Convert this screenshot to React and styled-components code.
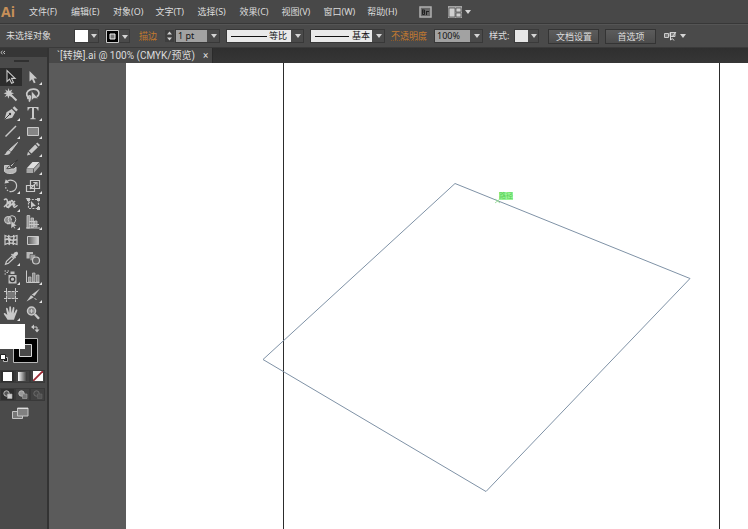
import React, { useState } from 'react';
import styled, { createGlobalStyle } from 'styled-components';

const GlobalStyle = createGlobalStyle`
  * {
    box-sizing: border-box;
  }
  body {
    margin: 0;
    background: #333333;
    color: #dcdcdc;
    font-family: 'Noto Sans', 'Noto Sans CJK SC', sans-serif;
    font-size: 9px;
    line-height: 12px;
  }
  button, input, select {
    margin: 0;
    padding: 0;
    border: 0;
    background: none;
    color: inherit;
    font: inherit;
  }
  svg {
    display: block;
    flex: none;
  }
`;

const Window = styled.div`
  display: flex;
  flex-direction: column;
  min-height: 100vh;
`;

const MenuBar = styled.header`
  display: flex;
  align-items: center;
  height: 24px;
  background: #484848;
  border-bottom: 1px solid #383838;
`;

const Logo = styled.span`
  width: 24px;
  padding-left: 1px;
  color: #c79059;
  font-family: 'Open Sans', sans-serif;
  font-size: 14px;
  font-weight: bold;
  line-height: 18px;
`;

const Menus = styled.nav`
  display: flex;
`;

const MenuButton = styled.button`
  height: 20px;
  min-width: 42px;
  padding: 0 7px 0 5px;
  text-align: left;
  white-space: nowrap;
`;

const BarTools = styled.div`
  display: flex;
  align-items: center;
  gap: 16px;
  margin-left: 15px;
`;

const IconButton = styled.button`
  display: flex;
  align-items: center;
  gap: 3px;
`;

const ControlBar = styled.div`
  display: flex;
  align-items: center;
  gap: 6px;
  height: 24px;
  padding: 0 6px;
  background: #4a4a4a;
  border-top: 1px solid #555555;
  border-bottom: 1px solid #3a3a3a;
  white-space: nowrap;
`;

const Status = styled.span`
  width: 62px;
`;

const Group = styled.div`
  display: flex;
  align-items: center;
  gap: ${(props) => props.$gap || 6}px;
  margin-left: ${(props) => props.$indent || 0}px;
`;

const Label = styled.label`
  color: #c47a30;
  width: ${(props) => props.$width}px;
  text-decoration: underline dotted #8a5a2c;
`;

const SwatchButton = styled.button`
  display: grid;
  grid-template-columns: 13px 11px;
  align-items: center;
  justify-items: center;
  height: 14px;
  border: 1px solid #3a3a3a;
  width: 25px;
`;

const Swatch = styled.span`
  width: 13px;
  height: 12px;
  background: ${(props) => props.$color};
`;

const Combo = styled.div`
  display: grid;
  grid-template-columns: 1fr 11px;
  align-items: center;
  width: ${(props) => props.$width}px;
  height: 14px;
  border: 1px solid #383838;
  background: linear-gradient(${(props) => props.$fill}, ${(props) => props.$fill})
    no-repeat left / calc(100% - 12px) 100%;
  color: #161616;
  select,
  input {
    grid-area: 1 / 1 / 2 / 3;
    appearance: none;
    width: 100%;
    height: 12px;
    padding-left: ${(props) => props.$pad || 2}px;
    line-height: 12px;
    outline: 0;
  }
  input {
    width: calc(100% - 12px);
  }
  > svg {
    grid-area: 1 / 2;
    justify-self: center;
    pointer-events: none;
  }
`;

const StrokeLine = styled.span`
  grid-area: 1 / 1;
  width: ${(props) => props.$length}px;
  height: 1px;
  margin-left: 4px;
  background: #111111;
  pointer-events: none;
`;

const TextButton = styled.button`
  width: 51px;
  height: 15px;
  border: 1px solid #343434;
  background: linear-gradient(#5c5c5c, #4c4c4c);
  line-height: 13px;
`;

const Body = styled.div`
  display: flex;
  flex: 1;
`;

const ToolPanel = styled.aside`
  display: flex;
  flex-direction: column;
  width: 49px;
  background: #4a4a4a;
  border-right: 2px solid #333333;
`;

const PanelHead = styled.div`
  height: 9px;
  background: #363636;
  color: #c8c8c8;
`;

const Grip = styled.div`
  display: flex;
  justify-content: center;
  padding: 3px 4px 7px 0;
  height: 11px;
  &::before {
    content: '';
    width: 15px;
    height: 2px;
    background: #303030;
  }
`;

const ToolGrid = styled.div`
  display: grid;
  grid-template-columns: 22px 22px;
  margin-bottom: 1px;
`;

const ToolButton = styled.button`
  display: flex;
  align-items: center;
  justify-content: center;
  height: 18px;
  color: #c9c9c9;
  background: ${(props) => (props.$active ? '#2d2d2d' : 'transparent')};
`;

const PaintButtons = styled.div`
  display: grid;
  grid-template-columns: repeat(3, 15px);
  height: 18px;
  align-items: center;
`;

const PaintButton = styled.button`
  display: flex;
  align-items: center;
  justify-content: center;
  height: 13px;
  background: ${(props) => (props.$active ? '#2f2f2f' : '#424242')};
  border: 1px solid #393939;
`;

const ScreenButton = styled.button`
  display: flex;
  margin: 4px 0 0 12px;
`;

const Document = styled.section`
  display: flex;
  flex: 1;
  flex-direction: column;
  min-width: 0;
`;

const TabStrip = styled.div`
  display: flex;
  height: 15px;
  background: linear-gradient(#2f2f2f, #363636);
`;

const Tab = styled.div`
  display: flex;
  align-items: center;
  gap: 8px;
  padding: 0 4px 0 8px;
  background: #484848;
  border-right: 1px solid #2b2b2b;
  font-family: Roboto, 'Noto Sans CJK SC', sans-serif;
  font-size: 10px;
  white-space: nowrap;
`;

const Pasteboard = styled.main`
  display: flex;
  flex: 1;
  padding-left: 77px;
  background: #5b5b5b;
`;

const Canvas = styled.div`
  position: relative;
  flex: 1;
  overflow: hidden;
  background: #ffffff;
`;

const Drawing = styled.svg`
  position: absolute;
  width: 100%;
  height: 100%;
`;

const PathHint = styled.span`
  position: absolute;
  left: 373px;
  top: 129px;
  background: #9af598;
  color: #57cf55;
  font-size: 7px;
  line-height: 8px;
`;

const Arrow = () => (
  <svg width="6" height="4" viewBox="0 0 6 4">
    <path d="M0 0h6L3 4z" fill="#d4d4d4" />
  </svg>
);

const line = { fill: 'none', stroke: 'currentColor', strokeWidth: 1.2 };

const icons = {
  selection: (
    <path d="M4 1.5v11l2.6-2.4 2 4.2 1.9-.9-2-4h3.6z" fill="#222" stroke="currentColor" strokeWidth="1.1" />
  ),
  direct: <path d="M4.5 2v10.5l2.5-2.3 1.9 4 1.7-.8-1.9-3.9h3.4z" fill="currentColor" />,
  wand: (
    <>
      <path d="M7.5 7.5l6 6" stroke="currentColor" strokeWidth="1.9" />
      <path d="M5.5 1l1 3 2.8-1.6L8 5.3l3 1-3 1.1 1.2 2.8-2.8-1.5-1 3-1-3-3 1.5L3.6 7.4l-3-1.1 3-1-1.5-2.9L4.700 4z" fill="currentColor" />
    </>
  ),
  lasso: (
    <>
      <path d="M5 11.5C1.5 10.5.8 6.5 3 4.2c3-3 9-2.5 10.5.3 1.2 2.3-.2 5-2.5 5.5M4 9c-2 .8-1.5 3 .5 2.6S6 8.500 4 9M5 12c0 1.200-.5 2-1.200 2.400" {...line} strokeWidth="1.7" />
      <path d="M6.500 4v9.500l2.400-2.200 4.300.2z" fill="currentColor" stroke="#4a4a4a" strokeWidth=".5" />
    </>
  ),
  pen: (
    <>
      <path d="M1.500 14.500l2-7.300L8.700 4l3.500 3.400-3 5.300z" fill="currentColor" />
      <path d="M9.600 3l1.700-1.700 3.600 3.500-1.700 1.700z" fill="currentColor" />
      <path d="M1.500 14.500l5-5" stroke="#3a3a3a" />
      <circle cx="7" cy="9" r="1.200" fill="#3a3a3a" />
    </>
  ),
  type: (
    <path d="M2.500 2h11v3.400h-.8C12.300 3.500 11.600 3 9 3v9.300c0 .9.400 1.100 1.700 1.200v.8H5.300v-.8c1.300-.1 1.700-.3 1.700-1.200V3c-2.600 0-3.300.5-3.700 2.400h-.8z" fill="currentColor" />
  ),
  segment: <path d="M2.500 13.500l10.500-10.500" stroke="currentColor" strokeWidth="1.400" />,
  rectangle: <path d="M2.500 4.500h11v8h-11z" fill="#858585" stroke="currentColor" />,
  brush: (
    <>
      <path d="M14.500 1.500L8 10.300 6.300 8.700z" fill="currentColor" stroke="currentColor" />
      <path d="M5.800 9.200l1.900 1.900c-.5 2.300-3.200 3.300-6.700 2.800 2.300-.8 2-4 4.800-4.700z" fill="currentColor" />
    </>
  ),
  pencil: (
    <>
      <path d="M2 14.500l1-3.700 2.700 2.700zM3.800 9.900l6.400-6.400 2.700 2.700-6.400 6.400z" fill="currentColor" />
      <path d="M11 2.700l1.300-1.300 2.700 2.700-1.300 1.300z" fill="currentColor" />
    </>
  ),
  blob: (
    <>
      <path d="M1.500 6.500h6l-2 3.500h5.500l2-2v4.500c-1.500 1.700-3.500 2-6 2s-4-.6-5.500-2z" fill="#b5b5b5" stroke="currentColor" />
      <path d="M14.500 1L8.600 7.800 7 6.400zM6.700 6.800l1.600 1.500C7 10 5.300 9.800 3.700 9.500c1.400-.7 1.200-2.300 3-2.700z" fill="currentColor" stroke="#2b2b2b" strokeWidth=".8" />
    </>
  ),
  eraser: (
    <>
      <path d="M1.500 9.500l6-6.500h7l-6 6.500z" fill="#dedede" />
      <path d="M1.500 10h6.700v4H1.500zM9 9.800l5.700-6.100v3.600L9 13.700z" fill="#a5a5a5" />
    </>
  ),
  rotate: (
    <>
      <path d="M4 3.500c4-3 9.600-.3 9.600 4.500 0 3-2.300 5.600-5.500 5.600" {...line} />
      <path d="M8 13.600C4.600 13.500 2.400 11 2.500 7.500" {...line} strokeDasharray="1.500 1.500" />
      <path d="M1.500 5.600l1.300-4.300 3.300 3.400z" fill="currentColor" />
    </>
  ),
  scale: (
    <>
      <path d="M5.500 2.500h9v8h-9z" {...line} />
      <path d="M1.500 7.500h8v6h-8z" {...line} />
      <path d="M5 11l6-6M8.300 4.500H12v3.700" {...line} />
    </>
  ),
  width: (
    <>
      <path d="M1 4c3-3 4 1 3 4s0 4.500 2 2 1.500-7 3.500-5-.5 5 1.500 6 2.500-2 3.500-1M1 11l6-6M5 12l7-7" {...line} strokeWidth="1.500" />
      <circle cx="5.500" cy="7" r="1.500" fill="currentColor" />
      <circle cx="11" cy="8.500" r="1.500" fill="currentColor" />
    </>
  ),
  transform: (
    <>
      <path d="M3.500 3.500h10v9h-10z" {...line} strokeDasharray="2 1.300" />
      <path d="M2 2h3v3H2zM12 2h3v3h-3zM12 11h3v3h-3zM6 5v7l2-1.800 3-.2z" fill="currentColor" />
      <path d="M1 2l4 5" stroke="currentColor" />
    </>
  ),
  builder: (
    <>
      <circle cx="5" cy="6" r="3.500" fill="#8d8d8d" stroke="currentColor" />
      <circle cx="9" cy="5.500" r="3.800" fill="none" stroke="currentColor" />
      <path d="M4 9.500h8" stroke="currentColor" strokeWidth="1.500" />
      <path d="M8 6.500v8.300l2.200-2 1 2 1.300-.6-1-2.100h2.700z" fill="currentColor" stroke="#3b3b3b" strokeWidth=".5" />
    </>
  ),
  perspective: (
    <>
      <path d="M2 1.500h2.700V14H2zM6 4h2.500v9.500H6zM9.500 7H12v6H9.500z" fill="#999" stroke="currentColor" strokeWidth=".8" />
      <path d="M1 14h14M4 10.500h10M4 7.500h6" stroke="currentColor" strokeWidth="1.100" />
    </>
  ),
  mesh: (
    <>
      <path d="M2 3.500c3 1.500 8 1.500 12 0v9c-4-1.500-9-1.500-12 0z" {...line} />
      <path d="M2 8c3-3 5 2 12-.5M6 3c-2 4 2 6 0 10M10.500 3c2 4-2 6 0 10" {...line} strokeWidth="1.500" />
      <circle cx="6.500" cy="7.500" r="1.500" fill="currentColor" />
    </>
  ),
  gradient: (
    <>
      <defs>
        <linearGradient id="toolGradient">
          <stop offset="0" stopColor="#555" />
          <stop offset="1" stopColor="#d5d5d5" />
        </linearGradient>
      </defs>
      <path d="M2.500 4.500h11v8h-11z" fill="url(#toolGradient)" stroke="currentColor" />
    </>
  ),
  eyedropper: (
    <>
      <path d="M8 4.500l1-.9 1 .8C12 .8 15.200 1.300 15 3.500c0 1.500-1.700 2.600-2.700 3l.7.900-1 1z" fill="currentColor" />
      <path d="M8.800 6.300l2 2-5.300 5-3 1 1-3z" fill="#4a4a4a" stroke="currentColor" strokeWidth="1.200" />
    </>
  ),
  blend: (
    <>
      <path d="M1.500 2h6.500v6.500H1.500z" fill="#b8b8b8" />
      <path d="M5 4.500h5.500v6H5z" fill="#9a9a9a" stroke="#555" strokeWidth=".7" />
      <circle cx="11" cy="10.500" r="3.500" fill="#606060" stroke="currentColor" strokeWidth="1.200" />
    </>
  ),
  spray: (
    <>
      <path d="M5.500 6h8v8.500h-8zM7.500 2.500h4V5h-4z" fill="#c0c0c0" />
      <circle cx="9.500" cy="10.200" r="2.300" fill="#c0c0c0" stroke="#3b3b3b" strokeWidth="1.300" />
      <path d="M1.500 2h1.500M4.500 2H6M1.500 5H3M3.500 3.500H5" stroke="currentColor" />
    </>
  ),
  graph: (
    <>
      <path d="M1.500 1.500v12h13" {...line} strokeWidth="1" />
      <path d="M3.500 8H6v5H3.500zM7.500 4H10v9H7.500zM11.500 6H14v7h-2.500z" fill="#8e8e8e" stroke="currentColor" strokeWidth=".7" />
    </>
  ),
  artboard: (
    <>
      <path d="M3.500 4.500h9v7h-9z" fill="#777" />
      <path d="M3.500 1v14M12.500 1v14M1 4.500h14M1 11.500h14" stroke="currentColor" strokeDasharray="3 .8" />
    </>
  ),
  slice: (
    <>
      <path d="M15 1.500L9.500 9 6.700 7.800z" fill="currentColor" />
      <path d="M6 8.300l2.800 1.900-7.300 4.300z" fill="currentColor" />
      <path d="M9.500 11l2 2" stroke="currentColor" />
    </>
  ),
  hand: (
    <path d="M4.500 14.800c-1-2.300-2.500-3.800-3.700-5.800-.2-1.200 1-1.300 1.800-.5l1.700 1.600L3 3.800c0-1.200 1.300-1.300 1.700-.2L6.200 8l.1-6c.2-1.100 1.500-1.100 1.700 0L8.500 8l1.300-5.300c.4-1 1.600-.8 1.600.4l-.6 5.600 2-3.700c.7-.9 1.800-.2 1.500.8l-2.300 6-1 3z" fill="currentColor" />
  ),
  zoom: (
    <>
      <circle cx="6.500" cy="6" r="4" fill="#858585" stroke="currentColor" strokeWidth="1.500" />
      <path d="M4.500 6h4M6.500 4v4" stroke="currentColor" />
      <path d="M9.800 9.300l4.200 4.500" stroke="currentColor" strokeWidth="2.400" />
    </>
  ),
};

const toolGroups = [
  [
    ['selection', '选择工具'],
    ['direct', '直接选择工具', true],
    ['wand', '魔棒工具'],
    ['lasso', '套索工具'],
    ['pen', '钢笔工具', true],
    ['type', '文字工具', true],
    ['segment', '直线段工具', true],
    ['rectangle', '矩形工具', true],
    ['brush', '画笔工具'],
    ['pencil', '铅笔工具', true],
    ['blob', '斑点画笔工具'],
    ['eraser', '橡皮擦工具', true],
  ],
  [
    ['rotate', '旋转工具', true],
    ['scale', '比例缩放工具', true],
    ['width', '宽度工具', true],
    ['transform', '自由变换工具'],
    ['builder', '形状生成器工具', true],
    ['perspective', '透视网格工具', true],
    ['mesh', '网格工具'],
    ['gradient', '渐变工具'],
    ['eyedropper', '吸管工具', true],
    ['blend', '混合工具'],
  ],
  [
    ['spray', '符号喷枪工具', true],
    ['graph', '柱形图工具', true],
    ['artboard', '画板工具'],
    ['slice', '切片工具', true],
    ['hand', '抓手工具', true],
    ['zoom', '缩放工具'],
  ],
];

const menus = [
  '文件(F)',
  '编辑(E)',
  '对象(O)',
  '文字(T)',
  '选择(S)',
  '效果(C)',
  '视图(V)',
  '窗口(W)',
  '帮助(H)',
];

const Tool = ({ name, label, flyout, active, onClick }) => (
  <ToolButton type="button" aria-label={label} $active={active} onClick={onClick}>
    <svg width="22" height="18" viewBox="0 0 22 18">
      <g transform="translate(3 1)">{icons[name]}</g>
      {flyout && <path d="M20 14v3h-3z" fill="#e4e4e4" />}
    </svg>
  </ToolButton>
);

const ColorWell = () => (
  <svg width="46" height="44" viewBox="0 -1 46 44">
    <path d="M13.500 14.500h24v24h-24z" fill="#000" stroke="#b9b9b9" />
    <path d="M19.500 20.500h12v12h-12z" fill="#4a4a4a" stroke="#d9d9d9" />
    <path d="M0 0h25v25H0z" fill="#fff" />
    <path d="M31 3l3-2.500v5zM34.500 5.500h5L37 8.500z" fill="#c9c9c9" />
    <path d="M33 3h4v4" fill="none" stroke="#c9c9c9" />
    <path d="M3.500 33.500h4v4h-4z" fill="#111" stroke="#bbb" />
    <path d="M.500 30.500h5v5h-5z" fill="#fff" stroke="#222" />
  </svg>
);

const App = () => {
  const [tool, setTool] = useState('selection');
  const [weight, setWeight] = useState('1 pt');

  return (
    <Window>
      <GlobalStyle />
      <MenuBar>
        <Logo>Ai</Logo>
        <Menus>
          {menus.map((menu) => (
            <MenuButton type="button" key={menu}>
              {menu}
            </MenuButton>
          ))}
        </Menus>
        <BarTools>
          <IconButton type="button" aria-label="Bridge">
            <svg width="13" height="12" viewBox="0 0 13 12">
              <path d="M1 1h11v10H1z" fill="#666" stroke="#b0b0b0" strokeWidth="1.500" />
              <path d="M3.500 3.500v5M3.500 4h2v2h-2M3.500 8.500h2V6M7.500 5v4M7.500 5.500h2.500" fill="none" stroke="#222" />
            </svg>
          </IconButton>
          <IconButton type="button" aria-label="排列文档">
            <svg width="14" height="12" viewBox="0 0 14 12">
              <path d="M0 0h14v12H0z" fill="#a5a5a5" />
              <path d="M1 2h6v9H1zM8 2h5v4H8zM8 7h5v4H8z" fill="#d0d0d0" stroke="#555" strokeWidth=".8" />
            </svg>
            <Arrow />
          </IconButton>
        </BarTools>
      </MenuBar>

      <ControlBar>
        <Status>未选择对象</Status>
        <SwatchButton type="button" aria-label="填色">
          <Swatch $color="#ffffff" />
          <Arrow />
        </SwatchButton>
        <SwatchButton type="button" aria-label="描边颜色">
          <svg width="13" height="13" viewBox="0 0 13 13">
            <path d="M.500.500h12v12H.500z" fill="#000" stroke="#ccc" />
            <path d="M4 4h5v5H4z" fill="#777" stroke="#eee" />
          </svg>
          <Arrow />
        </SwatchButton>
        <Group $indent={3}>
          <Label $width={20} htmlFor="weight">
            描边
          </Label>
          <Group $gap={1}>
            <svg width="9" height="12" viewBox="0 0 9 12">
              <path d="M0 0h9v12H0z" fill="#3e3e3e" />
              <path d="M2 4.500h5L4.500 1.500zM2 7.500h5l-2.500 3z" fill="#d0d0d0" />
            </svg>
            <Combo $width={45} $fill="#a2a2a2">
              <input id="weight" value={weight} onChange={(e) => setWeight(e.target.value)} />
              <Arrow />
            </Combo>
          </Group>
        </Group>
        <Combo $width={78} $fill="#e9e9e9" $pad={42}>
          <StrokeLine $length={36} />
          <select aria-label="变量宽度配置文件">
            <option>等比</option>
          </select>
          <Arrow />
        </Combo>
        <Combo $width={75} $fill="#e9e9e9" $pad={41}>
          <StrokeLine $length={34} />
          <select aria-label="画笔定义">
            <option>基本</option>
          </select>
          <Arrow />
        </Combo>
        <Label $width={37} htmlFor="opacity">
          不透明度
        </Label>
        <Combo $width={49} $fill="#a2a2a2">
          <select id="opacity">
            <option>100%</option>
          </select>
          <Arrow />
        </Combo>
        <Group $gap={5}>
          <span>样式:</span>
          <SwatchButton type="button" aria-label="图形样式">
            <Swatch $color="#e6e6e6" />
            <Arrow />
          </SwatchButton>
        </Group>
        <Group $indent={3}>
          <TextButton type="button">文档设置</TextButton>
          <TextButton type="button">首选项</TextButton>
        </Group>
        <Group $indent={2}>
          <IconButton type="button" aria-label="选择类似的对象">
            <svg width="13" height="10" viewBox="0 0 13 10">
              <path d="M.500 2.500h4v4h-4zM6 1.500h5v4H6z" fill="#777" stroke="#ccc" />
              <path d="M6.500 2v7l1.800-1.500L10 9.500M12 1L8 6" fill="none" stroke="#ddd" />
            </svg>
            <Arrow />
          </IconButton>
        </Group>
      </ControlBar>

      <Body>
        <ToolPanel>
          <PanelHead>
            <svg width="6" height="8" viewBox="0 0 6 8">
              <path d="M2.500 3L.800 4.500 2.500 6M5 3L3.300 4.500 5 6" fill="none" stroke="currentColor" />
            </svg>
          </PanelHead>
          <Grip />
          {toolGroups.map((group) => (
            <ToolGrid key={group[0][0]}>
              {group.map(([name, label, flyout]) => (
                <Tool
                  key={name}
                  name={name}
                  label={label}
                  flyout={flyout}
                  active={tool === name}
                  onClick={() => setTool(name)}
                />
              ))}
            </ToolGrid>
          ))}
          <ColorWell />
          <PaintButtons>
            <PaintButton type="button" $active aria-label="颜色">
              <svg width="9" height="9">
                <path d="M0 0h9v9H0z" fill="#fff" />
              </svg>
            </PaintButton>
            <PaintButton type="button" aria-label="渐变">
              <svg width="9" height="9">
                <defs>
                  <linearGradient id="paintGradient">
                    <stop offset="0" stopColor="#fff" />
                    <stop offset="1" stopColor="#333" />
                  </linearGradient>
                </defs>
                <path d="M0 0h9v9H0z" fill="url(#paintGradient)" />
              </svg>
            </PaintButton>
            <PaintButton type="button" aria-label="无">
              <svg width="10" height="10">
                <path d="M0 0h10v10H0z" fill="#fff" />
                <path d="M0 10L10 0" stroke="#9d2a35" strokeWidth="1.800" />
              </svg>
            </PaintButton>
          </PaintButtons>
          <PaintButtons>
            {['正常绘图', '背面绘图', '内部绘图'].map((mode, i) => (
              <PaintButton type="button" key={mode} $active={i === 0} aria-label={mode}>
                <svg width="10" height="9" viewBox="0 0 10 9" opacity={i === 2 ? 0.35 : 1}>
                  <circle cx="3.500" cy="3.500" r="2.700" fill={i === 1 ? '#999' : '#555'} stroke="#bbb" />
                  <path d="M4.500 4h4.500v4.500H4.500z" fill={i === 0 ? '#ccc' : '#777'} stroke="#aaa" strokeWidth=".6" />
                </svg>
              </PaintButton>
            ))}
          </PaintButtons>
          <ScreenButton type="button" aria-label="更改屏幕模式">
            <svg width="17" height="13" viewBox="0 0 17 13">
              <path d="M.500 4.500h10v7h-10z" fill="#777" stroke="#c4c4c4" />
              <path d="M5.500 1h10.500v8H5.500z" fill="#808080" stroke="#c4c4c4" />
              <path d="M5.500 1.500h10.500" stroke="#ddd" />
            </svg>
          </ScreenButton>
        </ToolPanel>

        <Document>
          <TabStrip>
            <Tab>
              <span>`[转换].ai @ 100% (CMYK/预览)</span>
              <IconButton type="button" aria-label="关闭">
                ×
              </IconButton>
            </Tab>
          </TabStrip>
          <Pasteboard>
            <Canvas>
              <Drawing>
                <path d="M157.500 0v2000M593.500 0v2000" stroke="#2c2c2c" />
                <path
                  d="M329 120.500L564 215.500 360 428.500 137 296.500z"
                  fill="none"
                  stroke="#7f92a6"
                />
                <path d="M369 136l5 4M374 136l-5 4" stroke="#8cd98c" strokeWidth=".8" />
              </Drawing>
              <PathHint>路径</PathHint>
            </Canvas>
          </Pasteboard>
        </Document>
      </Body>
    </Window>
  );
};

export default App;
